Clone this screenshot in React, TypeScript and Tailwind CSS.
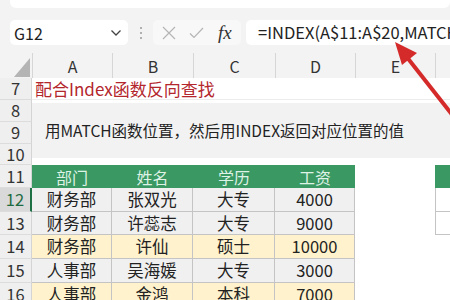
import React from "react";

const cols = "grid grid-cols-[32px_80px_81px_82px_80px_80px_1fr]";

type Row = { n: number; h: string; fill: string; cells: string[] };

const rows: Row[] = [
  { n: 12, h: "h-[24px]", fill: "bg-[#f0f0f0]", cells: ["财务部", "张双光", "大专", "4000"] },
  { n: 13, h: "h-[23px]", fill: "bg-[#f0f0f0]", cells: ["财务部", "许蕊志", "大专", "9000"] },
  { n: 14, h: "h-[24px]", fill: "bg-[#fff2cc]", cells: ["财务部", "许仙", "硕士", "10000"] },
  { n: 15, h: "h-[24px]", fill: "bg-[#f0f0f0]", cells: ["人事部", "吴海媛", "大专", "3000"] },
  { n: 16, h: "h-[24px]", fill: "bg-[#fff2cc]", cells: ["人事部", "金鸿", "本科", "7000"] }
];

const RowHead = ({ n, active }: { n: number; active?: boolean }) => (
  <div
    className={`flex items-center justify-center overflow-hidden border-b border-[#dcdcdc] text-[16.5px] leading-none ${
      active ? "border-r-2 border-r-[#1e7145] bg-[#d9d9d9] text-[#1e6b41]" : "border-r border-r-[#d4d4d4] bg-[#efefef] text-[#333]"
    }`}
  >
    {n}
  </div>
);

export default function App() {
  return (
    <div className="relative h-[300px] w-[450px] overflow-hidden bg-[#f3f3f3] font-['Noto_Sans_CJK_SC',sans-serif] text-[#262626]">
      <div className="h-[8px] pl-[10px]">
        <div className="h-full rounded-b-[6px] bg-white" />
      </div>

      <div className="mt-[12px] flex h-[25px] items-center">
        <div className="ml-[10px] flex h-full w-[118px] items-center justify-between rounded-[5px] bg-white pl-[4px] pr-[6px] text-[16px] leading-none text-[#222]">
          <span>G12</span>
          <svg width="12" height="8" viewBox="0 0 12 8" fill="none" stroke="#444" strokeWidth="1.3">
            <path d="M1.5 1.5 L6 6 L10.5 1.5" />
          </svg>
        </div>
        <div className="flex w-[25px] flex-col items-center gap-[3px]">
          <span className="h-[2px] w-[2px] rounded-full bg-[#9a9a9a]" />
          <span className="h-[2px] w-[2px] rounded-full bg-[#9a9a9a]" />
          <span className="h-[2px] w-[2px] rounded-full bg-[#9a9a9a]" />
        </div>
        <div className="flex h-full w-[88px] items-center rounded-[5px] bg-[#f8f8f8] pl-[9px]">
          <svg width="14" height="14" viewBox="0 0 14 14" fill="none" stroke="#b5b5b5" strokeWidth="1.2">
            <path d="M1 1 L13 13 M13 1 L1 13" />
          </svg>
          <svg className="ml-[13px]" width="15" height="12" viewBox="0 0 15 12" fill="none" stroke="#b5b5b5" strokeWidth="1.2">
            <path d="M1 6.5 L5 10.5 L14 1" />
          </svg>
          <span className="ml-[14px] font-['Liberation_Serif',serif] text-[19px] italic leading-none text-[#333]">fx</span>
        </div>
        <div className="ml-[5px] flex h-full flex-1 items-center overflow-hidden whitespace-nowrap rounded-l-[5px] bg-white pl-[12px] text-[16.5px] leading-none text-[#222]">
          =INDEX(A$11:A$20,MATCH
        </div>
      </div>

      <div className={`${cols} mt-[8px] h-[25px] text-[16px] leading-none text-[#333]`}>
        <div className="flex items-end justify-end pb-[1px] pr-[2px]">
          <svg width="16" height="19" viewBox="0 0 16 19">
            <polygon points="16,0 16,19 0,19" fill="#b4b4b4" />
          </svg>
        </div>
        {["A", "B", "C", "D", "E", ""].map((c, i) => (
          <div key={i} className="flex items-center justify-center border-l border-[#d6d6d6]">
            {c}
          </div>
        ))}
      </div>

      <div className={`${cols} h-[22px] bg-white`}>
        <RowHead n={7} />
        <div className="col-span-6 flex items-center border-b border-[#ececec] pl-[3px] text-[17px] leading-none text-[#b3262c]">
          配合Index函数反向查找
        </div>
      </div>

      <div className={`${cols} h-[65px] bg-white`}>
        <div className="grid grid-rows-[22px_22px_21px]">
          <RowHead n={8} />
          <RowHead n={9} />
          <RowHead n={10} />
        </div>
        <div className="col-span-6 pt-[3px]">
          <div className="flex h-[55px] items-center whitespace-nowrap bg-[#f2f2f2] pl-[13px] text-[15.5px] leading-none text-[#222]">
            用MATCH函数位置，然后用INDEX返回对应位置的值
          </div>
        </div>
      </div>

      <div className={`${cols} h-[23px] bg-white`}>
        <RowHead n={11} />
        {["部门", "姓名", "学历", "工资"].map((t) => (
          <div key={t} className="flex items-center justify-center bg-[#3a9862] text-[16px] leading-none text-[#dff2e6]">
            {t}
          </div>
        ))}
        <div />
        <div className="bg-[#3a9862]" />
      </div>

      {rows.map((r) => (
        <div key={r.n} className={`${cols} ${r.h} bg-white`}>
          <RowHead n={r.n} active={r.n === 12} />
          {r.cells.map((c, i) => (
            <div
              key={i}
              className={`flex items-center justify-center border-b border-r border-[#c4c4c4] text-[16.5px] leading-none text-[#222] ${r.fill}`}
            >
              {c}
            </div>
          ))}
          <div />
          <div className={r.n <= 13 ? "border-b border-l border-[#c4c4c4]" : ""} />
        </div>
      ))}

      <svg className="pointer-events-none absolute inset-0" width="450" height="300" viewBox="0 0 450 300">
        <line x1="480" y1="150" x2="406" y2="56" stroke="#d42a2a" strokeWidth="4" />
        <polygon points="395,42 402,65 417,53" fill="#d42a2a" />
      </svg>
    </div>
  );
}
